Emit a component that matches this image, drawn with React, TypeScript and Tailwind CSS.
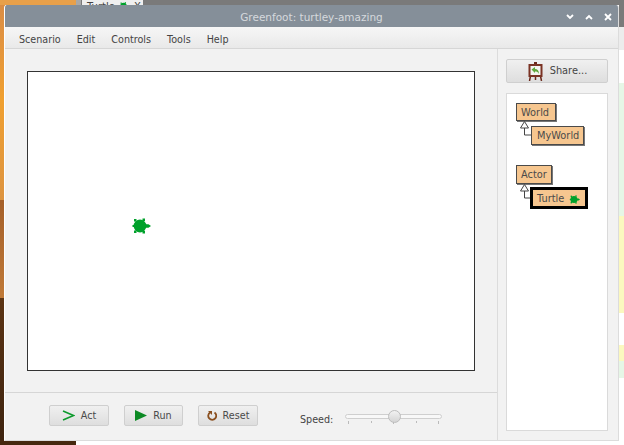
function TurtleIcon({ size }: { size: number }) {
  return (
    <svg width={size} height={size} viewBox="0 0 20 20" className="shrink-0">
      <g fill="#00a12b">
        <circle cx="9" cy="10" r="6.400" />
        <path d="M14 8.200h3.500l2.500 1.800-2.500 1.800H14z" />
        <rect x="3" y="3" width="2.500" height="2.500" />
        <rect x="11.500" y="2.500" width="2.500" height="2.500" />
        <rect x="3" y="14.500" width="2.500" height="2.500" />
        <rect x="11.500" y="15" width="2.500" height="2.500" />
        <rect x="1.500" y="9" width="2" height="2" />
      </g>
    </svg>
  );
}

function ShareIcon() {
  return (
    <svg width="17" height="19" viewBox="0 0 17 19" className="shrink-0">
      <path d="M7 0h3v2H7z" fill="#6b2a1c" />
      <path d="M3.500 14l-1 5M13.500 14l1 5M8.500 14v4" stroke="#6b2a1c" strokeWidth="1.500" />
      <rect x="1.500" y="2" width="14" height="13" fill="#7a3324" />
      <rect x="3.500" y="4" width="10" height="9" fill="#f4f4f0" />
      <path d="M4.500 7.500L8 5v2c2.500 0 4 1.500 4 5-1-2-2-2.500-4-2.500V11z" fill="#5fa83c" />
    </svg>
  );
}

function ToolButton({ icon, label, width }: { icon: React.ReactNode; label: string; width: string }) {
  return (
    <button className={`flex h-[21px] ${width} items-center justify-center gap-[6px] rounded-[2px] border border-[#cfcfcf] bg-gradient-to-b from-[#f0f0f0] to-[#dedede] text-[9.6px] text-[#4a4a4a]`}>
      {icon}
      <span className="pt-[2px]">{label}</span>
    </button>
  );
}

function ClassBox({ label, className }: { label: string; className: string }) {
  return (
    <div className={`flex items-center border border-[#4a4a4a] bg-[#f6c68f] pt-[2px] text-[9.8px] text-[#4a4a4a] shadow-[1px_1px_0_#777] ${className}`}>
      {label}
    </div>
  );
}

function Arrow() {
  return (
    <svg width="15" height="24" viewBox="0 0 15 24" className="shrink-0">
      <path d="M8.500 0.500L4.500 7h8z" fill="#fff" stroke="#444" />
      <path d="M8.500 7V14H15" fill="none" stroke="#444" />
    </svg>
  );
}

function WindowButtons() {
  return (
    <div className="absolute right-[6px] top-[8px] flex items-center gap-[11px]">
      <svg width="8" height="6" viewBox="0 0 8 6">
        <path d="M1 1l3 3 3-3" fill="none" stroke="#fff" strokeWidth="1.800" />
      </svg>
      <svg width="8" height="6" viewBox="0 0 8 6">
        <path d="M1 5l3-3 3 3" fill="none" stroke="#fff" strokeWidth="1.800" />
      </svg>
      <svg width="8" height="8" viewBox="0 0 8 8">
        <path d="M1 1l6 6M7 1l-6 6" fill="none" stroke="#fff" strokeWidth="1.800" />
      </svg>
    </div>
  );
}

export default function App() {
  return (
    <div className="relative h-[445px] w-[624px] overflow-hidden bg-white font-['DejaVu_Sans',sans-serif]">
      {/* desktop behind the window */}
      <div className="absolute left-0 top-0 h-[200px] w-[5px] bg-gradient-to-b from-[#d98c45] via-[#f0a030] to-[#dd9440]" />
      <div className="absolute left-0 top-[200px] h-[98px] w-[5px] bg-gradient-to-b from-[#a5602a] to-[#c07a38]" />
      <div className="absolute left-0 top-[298px] h-[147px] w-[5px] bg-gradient-to-b from-[#5c3414] to-[#3e2410]" />
      <div className="absolute left-0 top-[440px] h-[5px] w-[76px] bg-[#46280f]" />
      <div className="absolute left-0 top-0 h-[5px] w-[76px] bg-[#e8a04a]" />
      <div className="absolute left-[76px] top-0 h-[5px] w-[548px] bg-[#7a7a7a]" />
      <div className="absolute left-[76px] top-0 h-[5px] w-[5px] bg-[#a8a8a8]" />
      <div className="absolute left-[82px] top-0 flex h-[12px] w-[61px] items-start overflow-hidden bg-[#efefef] pl-[5px] text-[10px] leading-[13px] text-[#444]">
        Turtle
        <span className="ml-[4px] mt-[1px]">
          <TurtleIcon size={10} />
        </span>
        <span className="ml-[5px]">X</span>
      </div>
      <div className="absolute left-[619px] top-[5px] h-[22px] w-[5px] bg-[#7a7a7a]" />
      <div className="absolute left-[619px] top-[27px] h-[23px] w-[5px] bg-[#ececec]" />
      <div className="absolute left-[619px] top-[83px] h-[133px] w-[5px] bg-[#e6f6e6]" />
      <div className="absolute left-[619px] top-[216px] h-[97px] w-[5px] bg-[#fbf8bf]" />
      <div className="absolute left-[619px] top-[345px] h-[16px] w-[5px] bg-[#fbf8bf]" />
      <div className="absolute left-[619px] top-[361px] h-[17px] w-[5px] bg-[#e6f6e6]" />

      {/* window */}
      <div className="relative ml-[4px] mt-[5px] flex h-[436px] w-[615px] flex-col overflow-hidden rounded-t-[3px] border-b border-l border-r border-b-[#dcdcdc] border-l-white border-r-[#dcdcdc] bg-[#f2f2f2]">
        <div className="relative flex h-[22px] shrink-0 items-center justify-center bg-[#858f99] pt-[4px] text-[10.500px] text-[#d5d9dd]">
          Greenfoot: turtley-amazing
          <WindowButtons />
        </div>
        <div className="flex h-[22px] shrink-0 items-center gap-[16px] border-b border-[#d6d6d6] bg-gradient-to-b from-[#f6f6f6] to-[#e9e9e9] pl-[14px] pt-[5px] text-[9.6px] text-[#444]">
          <span>Scenario</span>
          <span>Edit</span>
          <span>Controls</span>
          <span>Tools</span>
          <span>Help</span>
        </div>
        <div className="flex min-h-0 flex-1">
          <div className="flex w-[493px] shrink-0 flex-col border-r border-[#dcdcdc]">
            <div className="h-[344px] shrink-0 border-b border-[#d6d6d6] pl-[22px] pt-[22px]">
              <div className="relative h-[300px] w-[448px] border border-[#333] bg-white">
                {/* the actor on the world canvas */}
                <div className="absolute left-[103px] top-[144px]">
                  <TurtleIcon size={20} />
                </div>
              </div>
            </div>
            <div className="flex flex-1 items-start pl-[44px] pt-[12px]">
              <ToolButton
                label="Act"
                width="w-[60px]"
                icon={
                  <svg width="13" height="11" viewBox="0 0 13 11">
                    <path d="M1 1l10.500 4.500L1 10" fill="none" stroke="#0c9a2c" strokeWidth="1.500" />
                  </svg>
                }
              />
              <div className="w-[15px]" />
              <ToolButton
                label="Run"
                width="w-[59px]"
                icon={
                  <svg width="12" height="11" viewBox="0 0 12 11">
                    <path d="M0 0l12 5.500L0 11z" fill="#0c8a24" />
                  </svg>
                }
              />
              <div className="w-[15px]" />
              <ToolButton
                label="Reset"
                width="w-[60px]"
                icon={
                  <svg width="10" height="11" viewBox="0 0 10 11">
                    <path d="M3 2.500a4 4 0 1 0 4.500 0" fill="none" stroke="#8a4f1f" strokeWidth="1.800" />
                    <path d="M1 1h4v4z" fill="#8a4f1f" />
                  </svg>
                }
              />
              <span className="ml-[42px] mt-[8px] w-[45px] text-[9.6px] text-[#444]">Speed:</span>
              <div className="relative mt-[5px] h-[20px] w-[97px]">
                <div className="mt-[4px] h-[5px] rounded-full border border-[#cfcfcf] bg-[#f8f8f8]" />
                <div className="mx-[3px] mt-[2px] flex justify-between">
                  <i className="h-[3px] w-px bg-[#bbb]" />
                  <i className="h-[2px] w-px bg-[#bbb]" />
                  <i className="h-[3px] w-px bg-[#bbb]" />
                  <i className="h-[2px] w-px bg-[#bbb]" />
                  <i className="h-[3px] w-px bg-[#bbb]" />
                </div>
                <div className="absolute left-[43px] top-0 h-[13px] w-[13px] rounded-full border border-[#bdbdbd] bg-gradient-to-b from-[#f2f2f2] to-[#d4d4d4]" />
              </div>
            </div>
          </div>
          <div className="flex flex-1 flex-col pl-[8px] pr-[10px] pt-[10px]">
            <button className="flex h-[24px] shrink-0 items-center justify-center gap-[6px] rounded-[2px] border border-[#cfcfcf] bg-gradient-to-b from-[#f0f0f0] to-[#dedede] text-[9.8px] text-[#444]">
              <ShareIcon />
              <span className="pt-[1px]">Share...</span>
            </button>
            <div className="mb-[9px] mt-[10px] flex-1 border border-[#dadada] bg-white pl-[9px] pt-[9px]">
              <ClassBox label="World" className="h-[18px] w-[40px] pl-[4px]" />
              <div className="flex">
                <Arrow />
                <ClassBox label="MyWorld" className="mt-[5px] h-[19px] w-[53px] pl-[5px]" />
              </div>
              <ClassBox label="Actor" className="mt-[20px] h-[19px] w-[36px] pl-[4px]" />
              <div className="flex">
                <Arrow />
                <div className="ml-[-1px] mt-[3px] flex h-[22px] w-[58px] items-center gap-[5px] border-[3px] border-black bg-[#f6c68f] pl-[4px] pt-[2px] text-[9.8px] text-[#4a4a4a]">
                  Turtle
                  <TurtleIcon size={11} />
                </div>
              </div>
            </div>
          </div>
        </div>
      </div>
    </div>
  );
}
